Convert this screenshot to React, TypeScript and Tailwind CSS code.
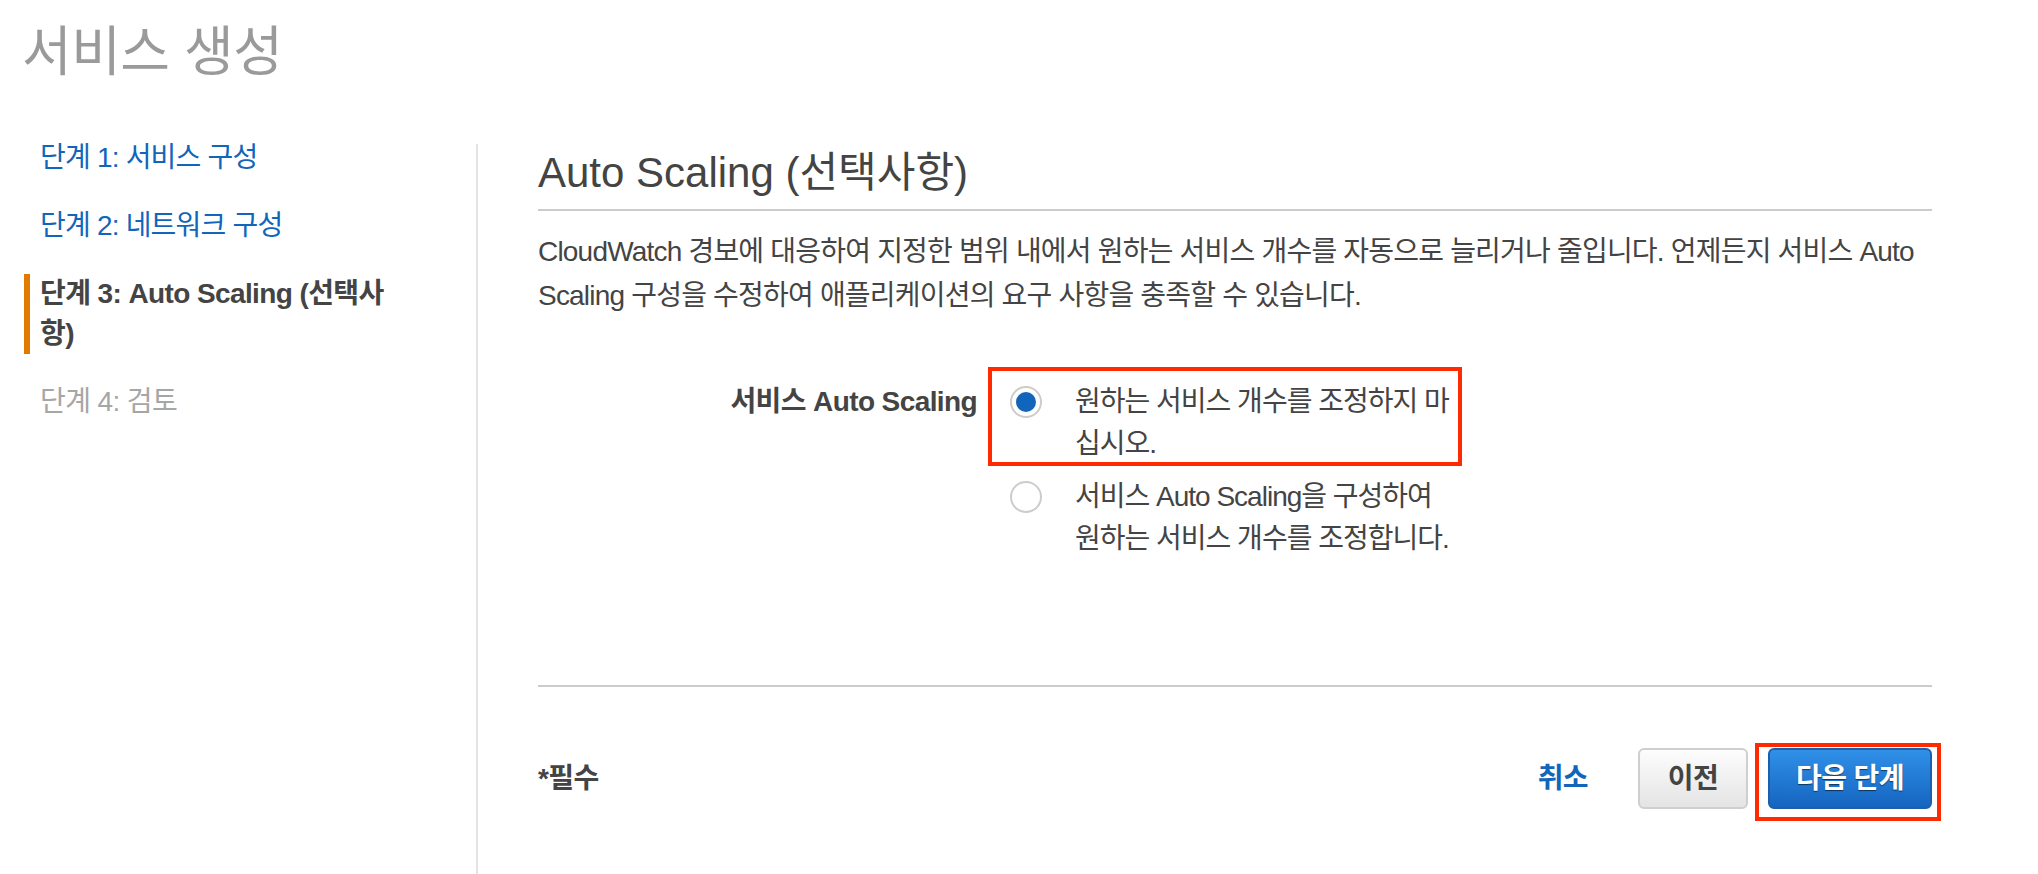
import React from "react";

const FONT = "font-['Liberation_Sans','Noto_Sans_CJK_KR',sans-serif] [font-feature-settings:'palt']";

function Radio({ checked }: { checked?: boolean }) {
  return (
    <span className="flex h-[42px] w-[32px] shrink-0 items-center justify-center">
      <span className="flex h-[32px] w-[32px] items-center justify-center rounded-full border-2 border-[#cccccc] bg-white">
        {checked ? <span className="h-[20px] w-[20px] rounded-full bg-[#1166bb]" /> : null}
      </span>
    </span>
  );
}

export default function App() {
  return (
    <div className={`${FONT} h-[874px] w-[2038px] overflow-hidden bg-white text-[#444444]`}>
      <h1 className="pl-[22px] pt-[20px] text-[54px] leading-[64px] font-normal tracking-[-0.5px] text-[#9a9a9a]">서비스 생성</h1>

      <div className="mt-[40px] flex h-[750px] tracking-[-0.6px]">
        {/* Sidebar */}
        <nav className="flex w-[476px] shrink-0 flex-col gap-[28px] pt-[14px] text-[28px] leading-[40px]">
          <a className="whitespace-nowrap pl-[40px] tracking-[-0.8px] text-[#1166bb]">단계 1: 서비스 구성</a>
          <a className="whitespace-nowrap pl-[40px] tracking-[-0.8px] text-[#1166bb]">단계 2: 네트워크 구성</a>
          <div className="ml-[24px] whitespace-nowrap border-l-[6px] border-[#e07b00] pl-[10px] font-bold text-[#444444]">
            단계 3: Auto Scaling (선택사
            <br />
            항)
          </div>
          <div className="whitespace-nowrap pl-[40px] text-[#a6a6a6]">단계 4: 검토</div>
        </nav>

        {/* Main */}
        <main className="mt-[20px] w-[1456px] min-w-0 shrink-0 border-l-2 border-[#e3e3e3] pl-[60px] pt-[4px]">
          <h2 className="border-b-2 border-[#cccccc] pb-[11px] text-[42px] leading-[50px] font-normal tracking-normal text-[#444444]">
            Auto Scaling (선택사항)
          </h2>
          <p className="mt-[19px] whitespace-nowrap text-[28px] leading-[44px] tracking-[-0.8px] text-[#444444]">
            CloudWatch 경보에 대응하여 지정한 범위 내에서 원하는 서비스 개수를 자동으로 늘리거나 줄입니다. 언제든지 서비스 Auto
            <br />
            Scaling 구성을 수정하여 애플리케이션의 요구 사항을 충족할 수 있습니다.
          </p>

          <div className="mt-[63px] flex text-[28px] leading-[42px]">
            <div className="w-[439px] shrink-0 whitespace-nowrap text-right font-bold text-[#444444]">서비스 Auto Scaling</div>
            <div className="ml-[33px] flex flex-col gap-[11px] tracking-[-1px]">
              <label className="relative flex">
                <Radio checked />
                <span className="ml-[33px] whitespace-nowrap">
                  원하는 서비스 개수를 조정하지 마
                  <br />
                  십시오.
                </span>
                <span className="pointer-events-none absolute left-[-22px] top-[-14px] h-[99px] w-[474px] border-4 border-[#ff2a00]" />
              </label>
              <label className="flex">
                <Radio />
                <span className="ml-[33px] whitespace-nowrap">
                  서비스 Auto Scaling을 구성하여
                  <br />
                  원하는 서비스 개수를 조정합니다.
                </span>
              </label>
            </div>
          </div>

          <div className="mt-[125px] border-t-2 border-[#cccccc]" />

          <div className="mt-[61px] flex items-center justify-between text-[28px]">
            <span className="font-bold text-[#444444]">*필수</span>
            <div className="flex items-center">
              <a className="mr-[50px] font-bold text-[#1166bb]">취소</a>
              <button className="flex h-[61px] w-[110px] items-center justify-center rounded-[6px] border-2 border-[#cfcfcf] bg-gradient-to-b from-[#fdfdfd] to-[#e4e4e4] font-bold text-[#444444]">
                이전
              </button>
              <div className="relative ml-[20px]">
                <button className="flex h-[61px] w-[164px] items-center justify-center rounded-[6px] border-2 border-[#1b5fae] bg-gradient-to-b from-[#3090e8] to-[#1565c0] font-bold text-white [text-shadow:0_1px_1px_rgba(0,0,0,0.55)]">
                  다음 단계
                </button>
                <span className="pointer-events-none absolute left-[-13px] top-[-5px] h-[78px] w-[186px] border-4 border-[#ff2a00]" />
              </div>
            </div>
          </div>
        </main>
      </div>
    </div>
  );
}
